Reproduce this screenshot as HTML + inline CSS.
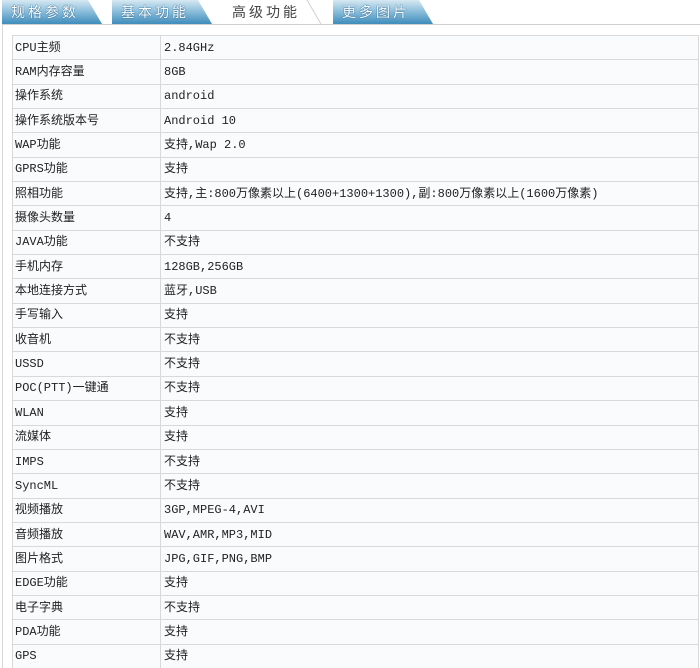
<!DOCTYPE html>
<html><head><meta charset="utf-8"><style>
html,body{margin:0;padding:0;background:#fff;width:700px;height:668px;overflow:hidden;}
.wrap{position:relative;width:700px;height:668px;}
.tab{position:absolute;top:0;height:24px;}
.tab svg{position:absolute;left:0;top:0;}
.tab span{position:absolute;left:0;top:3px;width:100%;text-align:center;font:14px "Noto Sans CJK SC",sans-serif;letter-spacing:3px;line-height:18px;}
.blue span{color:#fff;text-shadow:0 0 1px #1f5f8a,0 0 1px #1f5f8a;}
.base{position:absolute;left:2px;top:24px;width:698px;height:1px;background:#cfcfcf;}
.lside{position:absolute;left:2px;top:24px;width:1px;height:644px;background:#d8d8d8;}
table{position:absolute;left:12px;top:35px;width:687px;border-collapse:collapse;}
td{border:1px solid #d9d9d9;background:#fafbfd;height:23.35px;padding:0 0 0 2px;font:12px/14px "Liberation Mono","Noto Sans CJK SC",monospace;color:#222;white-space:nowrap;vertical-align:middle;}
td.k{width:145px;}
td.v{padding-left:3px;}
</style></head><body><div class="wrap">
<div class="tab blue" style="left:2px;width:100px"><svg width="100" height="24"><defs><linearGradient id="g" x1="0" y1="0" x2="0" y2="1"><stop offset="0" stop-color="#d6e8f2"/><stop offset="0.45" stop-color="#8fc0dc"/><stop offset="1" stop-color="#3f8cbc"/></linearGradient></defs><path d="M0 0H86L100 24H0Z" fill="url(#g)"/></svg><span style="width:86px">规格参数</span></div>
<div class="tab blue" style="left:112px;width:100px"><svg width="100" height="24"><path d="M0 0H86L100 24H0Z" fill="url(#g)"/></svg><span style="width:86px">基本功能</span></div>
<div class="tab" style="left:225px;width:96px"><svg width="96" height="25"><path d="M0 0H82L96 24V25H0Z" fill="#fff"/><path d="M82 0L96 24" stroke="#d0d0d0"/></svg><span style="width:82px;color:#444">高级功能</span></div>
<div class="tab blue" style="left:333px;width:100px"><svg width="100" height="24"><path d="M0 0H86L100 24H0Z" fill="url(#g)"/></svg><span style="width:86px">更多图片</span></div>
<div class="base"></div>
<div class="lside"></div>
<table>
<tr><td class="k">CPU主频</td><td class="v">2.84GHz</td></tr>
<tr><td class="k">RAM内存容量</td><td class="v">8GB</td></tr>
<tr><td class="k">操作系统</td><td class="v">android</td></tr>
<tr><td class="k">操作系统版本号</td><td class="v">Android 10</td></tr>
<tr><td class="k">WAP功能</td><td class="v">支持,Wap 2.0</td></tr>
<tr><td class="k">GPRS功能</td><td class="v">支持</td></tr>
<tr><td class="k">照相功能</td><td class="v">支持,主:800万像素以上(6400+1300+1300),副:800万像素以上(1600万像素)</td></tr>
<tr><td class="k">摄像头数量</td><td class="v">4</td></tr>
<tr><td class="k">JAVA功能</td><td class="v">不支持</td></tr>
<tr><td class="k">手机内存</td><td class="v">128GB,256GB</td></tr>
<tr><td class="k">本地连接方式</td><td class="v">蓝牙,USB</td></tr>
<tr><td class="k">手写输入</td><td class="v">支持</td></tr>
<tr><td class="k">收音机</td><td class="v">不支持</td></tr>
<tr><td class="k">USSD</td><td class="v">不支持</td></tr>
<tr><td class="k">POC(PTT)一键通</td><td class="v">不支持</td></tr>
<tr><td class="k">WLAN</td><td class="v">支持</td></tr>
<tr><td class="k">流媒体</td><td class="v">支持</td></tr>
<tr><td class="k">IMPS</td><td class="v">不支持</td></tr>
<tr><td class="k">SyncML</td><td class="v">不支持</td></tr>
<tr><td class="k">视频播放</td><td class="v">3GP,MPEG-4,AVI</td></tr>
<tr><td class="k">音频播放</td><td class="v">WAV,AMR,MP3,MID</td></tr>
<tr><td class="k">图片格式</td><td class="v">JPG,GIF,PNG,BMP</td></tr>
<tr><td class="k">EDGE功能</td><td class="v">支持</td></tr>
<tr><td class="k">电子字典</td><td class="v">不支持</td></tr>
<tr><td class="k">PDA功能</td><td class="v">支持</td></tr>
<tr><td class="k">GPS</td><td class="v">支持</td></tr>
</table>
</div></body></html>
